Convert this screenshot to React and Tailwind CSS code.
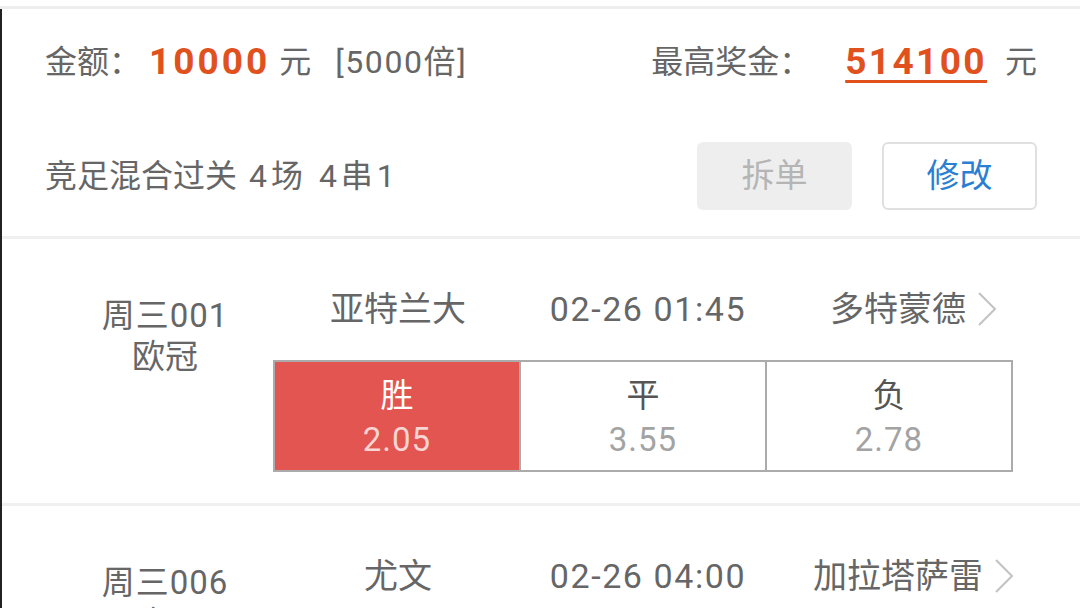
import React from 'react';

const font = { fontFamily: 'Roboto, "Noto Sans CJK SC", sans-serif' };

const matches = [
  {
    no: '周三001',
    league: '欧冠',
    home: '亚特兰大',
    time: '02-26 01:45',
    away: '多特蒙德',
    odds: [
      { label: '胜', value: '2.05', picked: true },
      { label: '平', value: '3.55' },
      { label: '负', value: '2.78' },
    ],
  },
  {
    no: '周三006',
    league: '欧冠',
    home: '尤文',
    time: '02-26 04:00',
    away: '加拉塔萨雷',
    odds: [
      { label: '胜', value: '1.95' },
      { label: '平', value: '3.40' },
      { label: '负', value: '3.10' },
    ],
  },
];

function Chevron() {
  return (
    <svg width="22" height="36" viewBox="0 0 22 36" className="ml-[10px] shrink-0">
      <path d="M3 2 L19 18 L3 34" fill="none" stroke="#c2c2c2" strokeWidth="2" />
    </svg>
  );
}

function MatchRow({ m }) {
  return (
    <div className="flex border-b-[3px] border-[#f0f0f0] h-[267px]">
      {/* left: match number + league */}
      <div className="w-[271px] pl-[55px] pt-[56px] text-center text-[33px] leading-[41px] text-[#666]">
        <div className="tracking-[1px]">{m.no}</div>
        <div>{m.league}</div>
      </div>

      <div className="flex flex-col pt-[50px]">
        <div className="flex h-[40px] items-center text-[34px] text-[#666]">
          <div className="w-[250px] text-center">{m.home}</div>
          <div className="w-[250px] text-center tracking-[1.6px]">{m.time}</div>
          <div className="w-[282px] flex items-center justify-center">
            <span>{m.away}</span>
            <Chevron />
          </div>
        </div>

        {/* odds table */}
        <div className="mt-[31px] flex w-[740px] h-[112px] border-2 border-[#ababab]">
          {m.odds.map((o, i) => (
            <div
              key={o.label}
              className={
                'flex-1 flex flex-col items-center justify-center ' +
                (i > 0 ? 'border-l-2 border-[#ababab] ' : '') +
                (o.picked ? 'bg-[#e25551]' : 'bg-white')
              }
            >
              <div className={'mt-[3px] text-[33px] leading-[42px] ' + (o.picked ? 'text-white' : 'text-[#555]')}>
                {o.label}
              </div>
              <div
                className={
                  'mt-[2px] text-[33px] leading-[42px] tracking-[1px] ' +
                  (o.picked ? 'text-[#f8d4d2]' : 'text-[#a3a3a3]')
                }
              >
                {o.value}
              </div>
            </div>
          ))}
        </div>
      </div>
    </div>
  );
}

export default function App() {
  return (
    <div className="w-[1080px] h-[608px] overflow-hidden bg-white" style={font}>
      <div className="h-[6px] bg-white" />
      <div className="h-[3px] bg-[#eeeeee]" />

      <div className="border-l-2 border-[#222]">
        {/* summary */}
        <div className="pl-[43px] pr-[43px] border-b-[3px] border-[#f0f0f0]">
          <div className="h-[106px] flex items-center justify-between text-[32px] text-[#666]">
            <div className="flex items-center">
              <span>金额：</span>
              <span className="ml-[8px] text-[37px] font-bold tracking-[3px] text-[#e0511e]">10000</span>
              <span className="ml-[9px]">元</span>
              <span className="ml-[24px] tracking-[1.6px]">[5000倍]</span>
            </div>
            <div className="flex items-center">
              <span>最高奖金：</span>
              <span className="ml-[34px] text-[37px] font-bold tracking-[2.4px] text-[#e0511e] underline decoration-[3px] underline-offset-[6px]">
                514100
              </span>
              <span className="ml-[18px]">元</span>
            </div>
          </div>

          <div className="h-[121px] flex items-center justify-between">
            <div className="text-[32px] text-[#666]">
              竞足混合过关<span className="tracking-[4px]"> 4场 4串1</span>
            </div>
            <div className="flex gap-[30px]">
              <button className="w-[155px] h-[68px] rounded-[6px] bg-[#eeeeee] text-[33px] text-[#b5b5b5]">
                拆单
              </button>
              <button className="w-[155px] h-[68px] rounded-[6px] border-2 border-[#e0e0e0] bg-white text-[33px] text-[#2b7fd2]">
                修改
              </button>
            </div>
          </div>
        </div>

        {matches.map((m) => (
          <MatchRow key={m.no} m={m} />
        ))}
      </div>
    </div>
  );
}
